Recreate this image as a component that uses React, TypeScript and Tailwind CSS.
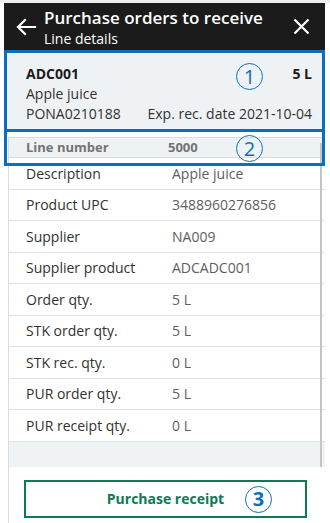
import React from "react";

const rows: [string, string][] = [
  ["Description", "Apple juice"],
  ["Product UPC", "3488960276856"],
  ["Supplier", "NA009"],
  ["Supplier product", "ADCADC001"],
  ["Order qty.", "5 L"],
  ["STK order qty.", "5 L"],
  ["STK rec. qty.", "0 L"],
  ["PUR order qty.", "5 L"],
  ["PUR receipt qty.", "0 L"],
];

const Marker = ({ n, className }: { n: string; className: string }) => (
  <div
    className={`absolute w-[27px] h-[27px] rounded-full border-[1.5px] border-[#0b6fbf] text-[#0b6fbf] flex items-center justify-center text-[20px] leading-none ${className}`}
  >
    {n}
  </div>
);

const App: React.FC = (): JSX.Element => {
  return (
    <div
      className="relative w-[330px] h-[523px] bg-white overflow-hidden pt-[3px]"
      style={{ fontFamily: '"Open Sans", "Noto Sans", sans-serif' }}
    >
      <div className="absolute inset-x-0 top-0 h-[3px] bg-[#eeeeee]" />
      <div className="mx-[4px] w-[321px]">
        {/* header */}
        <div className="h-[47px] bg-[#1b1b1b] flex items-center text-white">
          <div className="w-[40px] flex justify-center pl-[4px]">
            <svg width="22" height="18" viewBox="0 0 22 18" fill="none" stroke="white" strokeWidth="2.2" strokeLinecap="square">
              <path d="M20 9H3M10 2L3 9l7 7" />
            </svg>
          </div>
          <div className="flex-1 flex flex-col">
            <span className="text-[17px] leading-[23px] font-semibold">Purchase orders to receive</span>
            <span className="text-[14px] leading-[19px]">Line details</span>
          </div>
          <div className="w-[40px] flex justify-center pr-[8px]">
            <svg width="17" height="17" viewBox="0 0 17 17" stroke="white" strokeWidth="2.2">
              <path d="M1.5 1.5l14 14M15.5 1.5l-14 14" />
            </svg>
          </div>
        </div>

        {/* item card */}
        <div className="relative h-[82px] border-[3px] border-[#0b6fbf] bg-[#eef2f4] pl-[19px] pr-[10px] pt-[11px] text-[14px] text-[#323130] leading-[20px]">
          <div className="flex justify-between font-bold text-[#1b1b1b]">
            <span>ADC001</span>
            <span>5 L</span>
          </div>
          <div>Apple juice</div>
          <div className="flex justify-between">
            <span>PONA0210188</span>
            <span>Exp. rec. date 2021-10-04</span>
          </div>
          <Marker n="1" className="left-[229px] top-[10px]" />
        </div>

        {/* line number */}
        <div className="relative pt-[5px] pl-[4px]">
          <div className="h-[21px] bg-[#eef2f4] border-y border-[#d6dcdf] border-l border-l-[#d6dcdf] flex items-center pl-[17px] text-[13px] font-bold text-[#737373]">
            <span className="w-[142px]">Line number</span>
            <span>5000</span>
          </div>
          <div className="absolute left-0 right-0 top-0 h-[34px] border-[3px] border-t-0 border-[#0b6fbf] z-10" />
          <Marker n="2" className="left-[232px] top-[3px] z-10" />
        </div>

        {/* details */}
        <div className="relative ml-[4px] border-l border-[#d6dcdf]">
          {rows.map(([label, value]) => (
            <div key={label} className="h-[31.5px] border-b border-[#dde3e6] flex items-center pl-[17px] text-[14px]">
              <span className="w-[146px] text-[#323130]">{label}</span>
              <span className="text-[#605e5c]">{value}</span>
            </div>
          ))}
          <div className="h-[25px] bg-[#f0f3f4]" />
          <div className="absolute right-[3px] top-[-15px] h-[324px] w-[2px] bg-[#c4c4c4]" />
          <div className="h-[56px] flex items-start pt-[13px] pl-[15px]">
            <button className="relative w-[283px] h-[38px] border-2 border-[#0b7a55] text-[#0b7a55] font-bold text-[14px] flex items-center justify-center">
              Purchase receipt
              <Marker n="3" className="left-[219px] top-[4px]" />
            </button>
          </div>
        </div>
      </div>
    </div>
  );
};

export default App;
